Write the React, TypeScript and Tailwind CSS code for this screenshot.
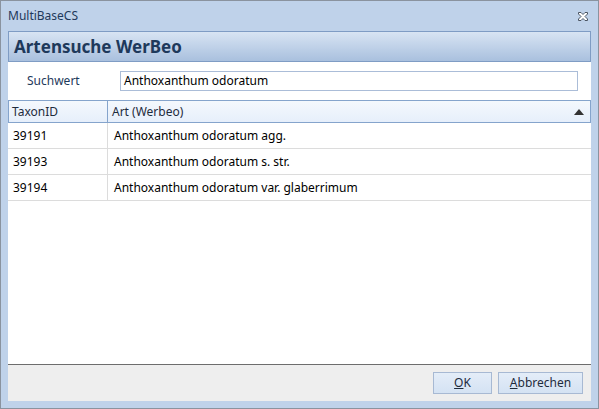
import React from 'react'

const rows = [
  { id: '39191', art: 'Anthoxanthum odoratum agg.' },
  { id: '39193', art: 'Anthoxanthum odoratum s. str.' },
  { id: '39194', art: 'Anthoxanthum odoratum var. glaberrimum' },
]

function CloseIcon() {
  return (
    <svg width="12" height="11" viewBox="0 0 12 11">
      <path
        d="M1.5 1.5h2.5l2 2 2-2h2.5v1.5l-2.5 2.5 2.5 2.5v1.5h-2.5l-2-2-2 2h-2.5v-1.5l2.5-2.5-2.5-2.5z"
        fill="#ffffff"
        stroke="#4b5563"
        strokeWidth="1"
        strokeLinejoin="round"
      />
    </svg>
  )
}

export default function App() {
  const font = { fontFamily: '"Segoe UI", "Noto Sans", "Open Sans", sans-serif' }
  const btn =
    'flex h-[22px] items-center justify-center border border-[#a7b9d3] bg-gradient-to-b from-[#e4edf8] to-[#d4e2f3] text-[12px] text-[#1e2b3c]'

  return (
    <div className="h-[409px] w-[599px] bg-white" style={font}>
      <div className="flex h-full w-full flex-col border border-[#8a939f] bg-[#bfd2ea]">
        <div className="flex h-[30px] items-center justify-between pl-[7px] pr-[9px]">
          <span className="text-[12px] text-[#1e395b]">MultiBaseCS</span>
          <CloseIcon />
        </div>
        <div className="mx-[7px] flex flex-1 flex-col bg-white">
          <div className="flex h-[31px] items-center border border-[#7f9cc4] bg-gradient-to-b from-[#d8e4f3] to-[#a9c0de] pl-[5px]">
            <span className="text-[17px] font-bold text-[#1e395b]">Artensuche WerBeo</span>
          </div>
          <div className="flex h-[38px] items-center">
            <span className="w-[112px] pl-[19px] text-[12px] text-[#1e395b]">Suchwert</span>
            <div className="flex h-[20px] w-[458px] items-center border border-[#abbdd8] px-[3px] text-[12px] text-black">
              Anthoxanthum odoratum
            </div>
          </div>
          <div className="flex flex-1 flex-col">
            <div className="flex h-[23px] border border-[#85a4cc] bg-gradient-to-b from-[#f4f8fd] to-[#e6effb] text-[12px] text-[#1e2b3c]">
              <div className="flex w-[99px] items-center border-r border-[#85a4cc] pl-[3px]">TaxonID</div>
              <div className="flex flex-1 items-center justify-between pl-[4px] pr-[6px]">
                <span>Art (Werbeo)</span>
                <svg width="10" height="6" viewBox="0 0 10 6">
                  <path d="M0 6L5 0L10 6Z" fill="#333" />
                </svg>
              </div>
            </div>
            {rows.map((r) => (
              <div key={r.id} className="flex h-[26px] border-b border-[#dcdcdc] text-[12px] text-black">
                <div className="flex w-[100px] items-center border-r border-[#dcdcdc] pl-[5px]">{r.id}</div>
                <div className="flex flex-1 items-center pl-[6px]">{r.art}</div>
              </div>
            ))}
            <div className="flex-1" />
          </div>
          <div className="flex h-[37px] items-center justify-end gap-[6px] border-t border-[#6d6d6d] bg-[#eeeeee] pr-[8px]">
            <button className={`${btn} w-[59px]`}>
              <span><u>O</u>K</span>
            </button>
            <button className={`${btn} w-[85px]`}>
              <span><u>A</u>bbrechen</span>
            </button>
          </div>
        </div>
        <div className="h-[7px]" />
      </div>
    </div>
  )
}
